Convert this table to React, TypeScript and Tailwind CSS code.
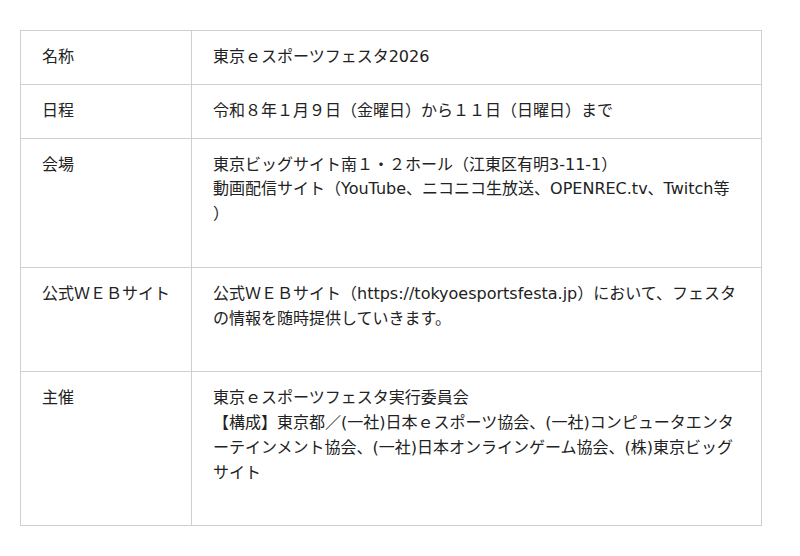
const rows: { label: string; lines: string[]; extra?: boolean }[] = [
  { label: "名称", lines: ["東京ｅスポーツフェスタ2026"] },
  { label: "日程", lines: ["令和８年１月９日（金曜日）から１１日（日曜日）まで"] },
  {
    label: "会場",
    lines: [
      "東京ビッグサイト南１・２ホール（江東区有明3-11-1）",
      "動画配信サイト（YouTube、ニコニコ生放送、OPENREC.tv、Twitch等",
      "）",
    ],
    extra: true,
  },
  {
    label: "公式ＷＥＢサイト",
    lines: ["公式ＷＥＢサイト（https://tokyoesportsfesta.jp）において、フェスタの情報を随時提供していきます。"],
    extra: true,
  },
  {
    label: "主催",
    lines: [
      "東京ｅスポーツフェスタ実行委員会",
      "【構成】東京都／(一社)日本ｅスポーツ協会、(一社)コンピュータエンターテインメント協会、(一社)日本オンラインゲーム協会、(株)東京ビッグサイト",
    ],
    extra: true,
  },
]

export default function App() {
  return (
    <div
      className="w-[800px] h-[556px] bg-white pt-[30px] pl-[20px] text-[16px] leading-[24.75px] text-[#222]"
      style={{ fontFamily: '"DejaVu Sans", "Noto Sans CJK JP", sans-serif' }}
    >
      <table className="w-[742px] border-collapse table-fixed">
        <colgroup>
          <col className="w-[171px]" />
          <col />
        </colgroup>
        <tbody>
          {rows.map((row) => (
            <tr key={row.label}>
              <td
                className={`border border-[#cfcfcf] align-top pl-[21px] pr-[10px] pt-[14px] ${
                  row.extra ? "pb-[40px]" : "pb-[14px]"
                }`}
              >
                {row.label}
              </td>
              <td
                className={`border border-[#cfcfcf] align-top pl-[21px] pr-[20px] pt-[14px] ${
                  row.extra ? "pb-[40px]" : "pb-[14px]"
                }`}
              >
                {row.lines.map((line) => (
                  <div key={line}>{line}</div>
                ))}
              </td>
            </tr>
          ))}
        </tbody>
      </table>
    </div>
  )
}
